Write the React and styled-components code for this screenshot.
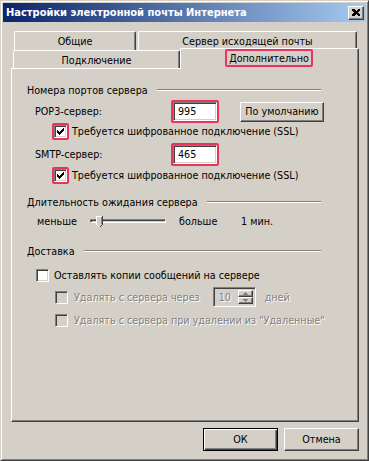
import React from "react";
import styled, { createGlobalStyle, css } from "styled-components";

const GlobalStyle = createGlobalStyle`
  html, body { margin: 0; padding: 0; background: #D4D0C8; }
  body { font-family: "DejaVu Sans Condensed", "Liberation Sans", sans-serif; font-size: 10.7px; color: #000; }
  * { box-sizing: border-box; }
`;

const FACE = "#D4D0C8";
const RED = "#E8335E";

const raised = css`
  border: 1px solid;
  border-color: #fff #404040 #404040 #fff;
  box-shadow: inset -1px -1px #808080;
`;
const sunken = css`
  border: 1px solid;
  border-color: #808080 #fff #fff #808080;
  box-shadow: inset 1px 1px #404040, inset -1px -1px ${FACE};
`;

const Window = styled.div`
  width: 369px;
  height: 461px;
  background: ${FACE};
  border: 1px solid;
  border-color: ${FACE} #404040 #404040 ${FACE};
  box-shadow: inset 1px 1px #fff, inset -1px -1px #808080;
  padding: 2px 2px 2px 2px;
  display: flex;
  flex-direction: column;
`;

const TitleBar = styled.div`
  height: 19px;
  display: flex;
  align-items: center;
  padding-left: 3px;
  padding-right: 2px;
  background: linear-gradient(to right, #0A246A, #A6CAF0);
`;

const Title = styled.div`
  flex: 1;
  color: #fff;
  font-weight: bold;
  font-size: 11px;
  white-space: nowrap;
`;

const CloseButton = styled.div`
  width: 16px;
  height: 14px;
  background: ${FACE};
  ${raised};
  display: flex;
  align-items: center;
  justify-content: center;
`;

const Body = styled.div`
  flex: 1;
  display: flex;
  flex-direction: column;
  padding: 9px 6px 0 8px;
`;

const TabStrip = styled.div`
  display: flex;
  flex-direction: column;
`;

const TabRow = styled.div`
  display: flex;
  align-items: flex-end;
  height: ${(p) => p.$h}px;
  padding-left: ${(p) => p.$indent}px;
  gap: ${(p) => p.$gap || 0}px;
`;

const Tab = styled.div`
  width: ${(p) => p.$w}px;
  height: ${(p) => p.$h}px;
  background: ${FACE};
  border-top: 1px solid #fff;
  border-left: 1px solid #fff;
  border-right: 1px solid #404040;
  box-shadow: inset -1px 0 #808080;
  border-radius: 2px 2px 0 0;
  display: flex;
  justify-content: center;
  align-items: flex-start;
  padding-top: ${(p) => p.$pt}px;
  white-space: nowrap;
  ${(p) =>
    p.$active &&
    css`
      position: relative;
      z-index: 1;
      margin-top: -2px;
      margin-bottom: -1px;
    `}
`;

const TabHighlight = styled.div`
  border: 2px solid ${RED};
  border-radius: 2px;
  height: 18px;
  padding: 0 2px 0 2px;
  display: flex;
  align-items: center;
  margin-left: -1px;
`;

const Panel = styled.div`
  width: 348px;
  height: 354px;
  border-top: 1px solid #fff;
  border-left: 1px solid #fff;
  border-right: 1px solid #404040;
  border-bottom: 1px solid #404040;
  box-shadow: inset -1px -1px #808080;
  display: flex;
  flex-direction: column;
`;

const Row = styled.div`
  display: flex;
  align-items: center;
  height: ${(p) => p.$h || 16}px;
  margin-top: ${(p) => p.$mt || 0}px;
  margin-left: ${(p) => p.$ml || 0}px;
  white-space: nowrap;
`;

const GroupHeader = styled(Row)`
  width: ${(p) => p.$w}px;
`;

const Rule = styled.div`
  flex: 1;
  height: 2px;
  margin-left: 9px;
  border-top: 1px solid #808080;
  border-bottom: 1px solid #fff;
`;

const FieldLabel = styled.div`
  width: ${(p) => p.$w}px;
  margin-left: ${(p) => p.$ml || 0}px;
`;

const RedFrame = styled.div`
  border: 2px solid ${RED};
  border-radius: 2px;
  display: flex;
`;

const TextBox = styled.div`
  width: ${(p) => p.$w}px;
  height: ${(p) => p.$h}px;
  ${sunken};
  background: ${(p) => (p.$disabled ? FACE : "#fff")};
  color: ${(p) => (p.$disabled ? "#808080" : "#000")};
  display: flex;
  align-items: center;
  padding-left: 4px;
`;

const PushButton = styled.div`
  width: ${(p) => p.$w}px;
  height: ${(p) => p.$h}px;
  background: ${FACE};
  ${raised};
  display: flex;
  align-items: center;
  justify-content: center;
  white-space: nowrap;
  margin-left: ${(p) => p.$ml || 0}px;
  ${(p) =>
    p.$default &&
    css`
      border: 1px solid #000;
      box-shadow: inset 1px 1px #fff, inset -1px -1px #404040, inset -2px -2px #808080;
    `}
`;

const CheckBoxBox = styled.div`
  width: 13px;
  height: 13px;
  ${sunken};
  background: ${(p) => (p.$disabled ? FACE : "#fff")};
  display: flex;
  align-items: center;
  justify-content: center;
  flex-shrink: 0;
`;

const CheckFrame = styled.div`
  border: 2px solid ${RED};
  border-radius: 2px;
  display: flex;
`;

const CheckLabel = styled.div`
  margin-left: ${(p) => p.$ml || 5}px;
  ${(p) =>
    p.$disabled &&
    css`
      color: #808080;
      text-shadow: 1px 1px #fff;
    `}
`;

const Disabled = styled.span`
  color: #808080;
  text-shadow: 1px 1px #fff;
`;

const SliderTrack = styled.div`
  position: relative;
  width: 76px;
  height: 20px;
  display: flex;
  align-items: center;
`;

const TrackLine = styled.div`
  width: 100%;
  height: 4px;
  border: 1px solid;
  border-color: #808080 #fff #fff #808080;
  box-shadow: inset 1px 1px #404040;
`;

const Thumb = styled.svg`
  position: absolute;
  left: 6px;
  top: 5px;
`;

const Spin = styled.div`
  width: 43px;
  height: 20px;
  ${sunken};
  display: flex;
  align-items: center;
  margin-left: ${(p) => p.$ml}px;
  padding: 2px 2px 2px 5px;
`;

const SpinText = styled(Disabled)`
  flex: 1;
`;

const SpinButtons = styled.div`
  display: flex;
  flex-direction: column;
  width: 15px;
  height: 100%;
`;

const SpinButton = styled.div`
  flex: 1;
  background: ${FACE};
  ${raised};
  display: flex;
  align-items: center;
  justify-content: center;
`;

const ButtonRow = styled.div`
  display: flex;
  justify-content: flex-end;
  margin-top: 6px;
  width: 348px;
`;

const CheckMark = () => (
  <svg width="7" height="7" viewBox="0 0 7 7" shapeRendering="crispEdges">
    <path d="M6 0h1v3h-1v1h-1v1h-1v1h-1v1h-1v-1h-1v-1h-1v-3h1v1h1v1h1v-1h1v-1h1z" fill="#000" />
  </svg>
);

const CheckBox = ({ checked, disabled }) => (
  <CheckBoxBox $disabled={disabled}>{checked && <CheckMark />}</CheckBoxBox>
);

const Arrow = ({ up }) => (
  <svg width="5" height="3" viewBox="0 0 5 3" shapeRendering="crispEdges">
    {up ? (
      <path d="M2 0h1v1h1v1h1v1h-5v-1h1v-1h1z" fill="#808080" />
    ) : (
      <path d="M0 0h5v1h-1v1h-1v1h-1v-1h-1v-1h-1z" fill="#808080" />
    )}
  </svg>
);

export default function App() {
  return (
    <>
      <GlobalStyle />
      <Window>
        <TitleBar>
          <Title>Настройки электронной почты Интернета</Title>
          <CloseButton>
            <svg width="8" height="7" viewBox="0 0 8 7" shapeRendering="crispEdges">
              <path d="M0 0h2l2 2 2-2h2v1l-2 2.5 2 2.5v1h-2l-2-2-2 2h-2v-1l2-2.5-2-2.5z" fill="#000" />
            </svg>
          </CloseButton>
        </TitleBar>
        <Body>
          <TabStrip>
            <TabRow $h={19} $indent={3} $gap={2}>
              <Tab $w={122} $h={19} $pt={3}>Общие</Tab>
              <Tab $w={219} $h={19} $pt={3}>Сервер исходящей почты</Tab>
            </TabRow>
            <TabRow $h={18} $indent={2}>
              <Tab $w={167} $h={18} $pt={3}>Подключение</Tab>
              <Tab $w={179} $h={21} $pt={0} $active>
                <TabHighlight>Дополнительно</TabHighlight>
              </Tab>
            </TabRow>
          </TabStrip>
          <Panel>
            <GroupHeader $mt={13} $ml={15} $w={294}>
              Номера портов сервера
              <Rule />
            </GroupHeader>
            <Row $h={23} $mt={2} $ml={23}>
              <FieldLabel $w={136}>POP3-сервер:</FieldLabel>
              <RedFrame>
                <TextBox $w={44} $h={19}>995</TextBox>
              </RedFrame>
              <PushButton $w={84} $h={20} $ml={21}>По умолчанию</PushButton>
            </Row>
            <Row $h={17} $mt={0} $ml={40}>
              <CheckFrame>
                <CheckBox checked />
              </CheckFrame>
              <CheckLabel $ml={3}>Требуется шифрованное подключение (SSL)</CheckLabel>
            </Row>
            <Row $h={23} $mt={3} $ml={23}>
              <FieldLabel $w={136}>SMTP-сервер:</FieldLabel>
              <RedFrame>
                <TextBox $w={44} $h={19}>465</TextBox>
              </RedFrame>
            </Row>
            <Row $h={17} $mt={1} $ml={40}>
              <CheckFrame>
                <CheckBox checked />
              </CheckFrame>
              <CheckLabel $ml={3}>Требуется шифрованное подключение (SSL)</CheckLabel>
            </Row>
            <GroupHeader $mt={10} $ml={15} $w={294}>
              Длительность ожидания сервера
              <Rule />
            </GroupHeader>
            <Row $h={20} $mt={1} $ml={25}>
              <FieldLabel $w={53}>меньше</FieldLabel>
              <SliderTrack>
                <TrackLine />
                <Thumb width="7" height="11" viewBox="0 0 7 11" shapeRendering="crispEdges">
                  <path d="M0 0h7v8l-3 3h-1l-3-3z" fill="#D4D0C8" />
                  <path d="M0 0h6v1h-5v7h-1z" fill="#fff" />
                  <path d="M6 0h1v8h-1z" fill="#404040" />
                  <path d="M5 1h1v7h-1z" fill="#808080" />
                  <path d="M6 8h1v1h-1z M5 9h1v1h-1z M4 10h1v1h-1z" fill="#404040" />
                  <path d="M0 8h1v1h-1z M1 9h1v1h-1z M2 10h1v1h-1z" fill="#fff" />
                </Thumb>
              </SliderTrack>
              <FieldLabel $w={62} $ml={13}>больше</FieldLabel>
              <span>1 мин.</span>
            </Row>
            <GroupHeader $mt={12} $ml={15} $w={294}>
              Доставка
              <Rule />
            </GroupHeader>
            <Row $h={16} $mt={8} $ml={24}>
              <CheckBox />
              <CheckLabel>Оставлять копии сообщений на сервере</CheckLabel>
            </Row>
            <Row $h={20} $mt={4} $ml={43}>
              <CheckBox disabled />
              <CheckLabel $ml={6} $disabled>Удалять с сервера через</CheckLabel>
              <Spin $ml={13}>
                <SpinText>10</SpinText>
                <SpinButtons>
                  <SpinButton><Arrow up /></SpinButton>
                  <SpinButton><Arrow /></SpinButton>
                </SpinButtons>
              </Spin>
              <CheckLabel $ml={9} $disabled>дней</CheckLabel>
            </Row>
            <Row $h={16} $mt={5} $ml={43}>
              <CheckBox disabled />
              <CheckLabel $ml={6} $disabled>Удалять с сервера при удалении из "Удаленные"</CheckLabel>
            </Row>
          </Panel>
          <ButtonRow>
            <PushButton $w={75} $h={23} $default>ОК</PushButton>
            <PushButton $w={75} $h={23} $ml={6}>Отмена</PushButton>
          </ButtonRow>
        </Body>
      </Window>
    </>
  );
}
